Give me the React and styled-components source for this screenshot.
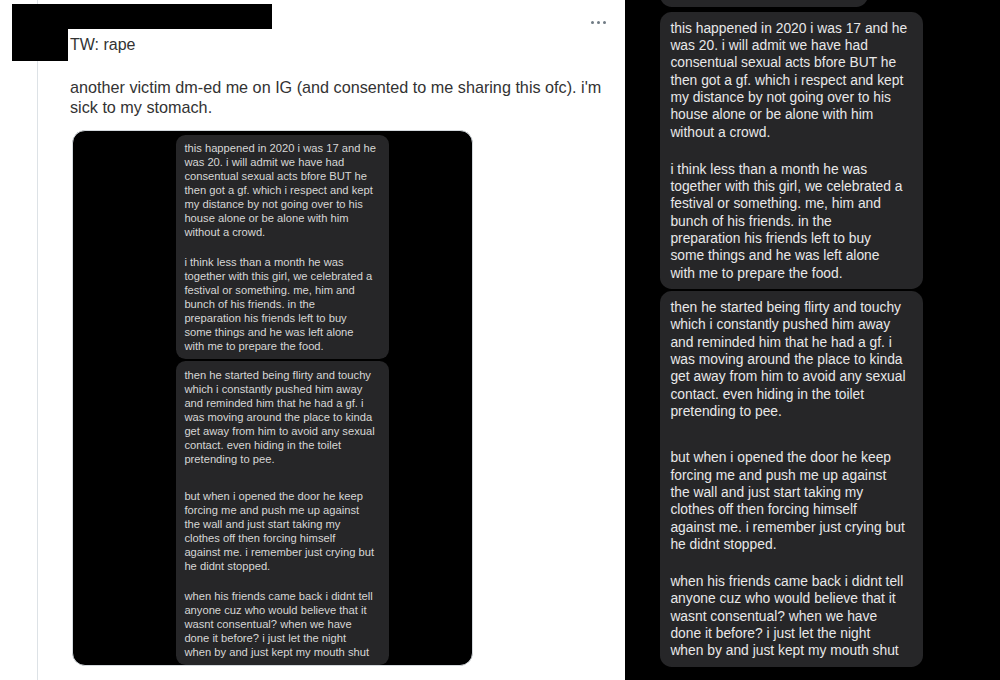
import React from 'react';
import styled, { createGlobalStyle } from 'styled-components';

const GlobalStyle = createGlobalStyle`
  html, body {
    margin: 0;
    padding: 0;
    background: #ffffff;
  }

  #root {
    height: 680px;
    overflow: hidden;
  }
`;

const Page = styled.div`
  display: flex;
  width: 1000px;
  height: 680px;
  overflow: hidden;
  font-family: 'Liberation Sans', Arial, sans-serif;
`;

const TweetPane = styled.div`
  position: relative;
  display: flex;
  flex: 0 0 625px;
  padding-left: 37px;
  box-sizing: border-box;
  background: #ffffff;
`;

const TweetColumn = styled.div`
  flex: 1;
  display: flex;
  flex-direction: column;
  padding: 12px 18px 0 32px;
  border-left: 1px solid #dde2e6;
`;

const Redaction = styled.div`
  position: absolute;
  top: 4px;
  left: 12px;
  width: ${props => props.$w}px;
  height: ${props => props.$h}px;
  background: #000000;
`;

const HeaderRow = styled.div`
  display: flex;
  justify-content: flex-end;
  align-items: center;
  height: 20px;
`;

const MoreButton = styled.div`
  display: flex;
  gap: 3px;
  padding-right: 1px;

  & span {
    width: 3px;
    height: 3px;
    border-radius: 50%;
    background: #707b84;
  }
`;

const Warning = styled.div`
  margin-top: 3px;
  font-size: 16px;
  line-height: 20px;
  color: #333333;
`;

const Body = styled.p`
  margin: 23px 0 0;
  font-size: 16.2px;
  line-height: 19.5px;
  color: #333333;
  white-space: nowrap;
`;

const Media = styled.div`
  margin: 13px 0 0 2px;
  width: 401px;
  height: 536px;
  box-sizing: border-box;
  padding: 4px 0 0 103px;
  border-radius: 13px;
  border: 1px solid #d4d9dd;
  background: #000000;
  overflow: hidden;
`;

const ScreenPane = styled.div`
  flex: 1;
  background: #000000;
  padding-left: 35px;
  overflow: hidden;
`;

const Thread = styled.div`
  display: flex;
  flex-direction: column;
  gap: 2px;
  font-size: ${props => props.$size}px;
  color: ${props => props.$ink};
`;

const Bubble = styled.div`
  width: 19em;
  box-sizing: border-box;
  padding: 0.55em 0.75em;
  border-radius: 0.85em;
  background: #262628;
`;

const Stub = styled(Bubble)`
  width: 15em;
  height: 30px;
  margin: -23px 0 3px;
  padding: 0;
`;

const Paragraph = styled.div`
  margin-top: ${props => props.$gap}em;
  line-height: 1.252em;
  white-space: nowrap;

  &:first-child {
    margin-top: 0;
  }
`;

const Line = styled.span`
  display: block;
`;

const messages = [
  [
    {
      gap: 0,
      lines: [
        'this happened in 2020 i was 17 and he',
        'was 20. i will admit we have had',
        'consentual sexual acts bfore BUT he',
        'then got a gf. which i respect and kept',
        'my distance by not going over to his',
        'house alone or be alone with him',
        'without a crowd.',
      ],
    },
    {
      gap: 1.42,
      lines: [
        'i think less than a month he was',
        'together with this girl, we celebrated a',
        'festival or something. me, him and',
        'bunch of his friends. in the',
        'preparation his friends left to buy',
        'some things and he was left alone',
        'with me to prepare the food.',
      ],
    },
  ],
  [
    {
      gap: 0,
      lines: [
        'then he started being flirty and touchy',
        'which i constantly pushed him away',
        'and reminded him that he had a gf. i',
        'was moving around the place to kinda',
        'get away from him to avoid any sexual',
        'contact. even hiding in the toilet',
        'pretending to pee.',
      ],
    },
    {
      gap: 2.1,
      lines: [
        'but when i opened the door he keep',
        'forcing me and push me up against',
        'the wall and just start taking my',
        'clothes off then forcing himself',
        'against me. i remember just crying but',
        'he didnt stopped.',
      ],
    },
    {
      gap: 1.42,
      lines: [
        'when his friends came back i didnt tell',
        'anyone cuz who would believe that it',
        'wasnt consentual? when we have',
        'done it before? i just let the night',
        'when by and just kept my mouth shut',
      ],
    },
  ],
];

const Conversation = ({ size, ink, stub }) => (
  <Thread $size={size} $ink={ink}>
    {stub && <Stub />}
    {messages.map((paragraphs, i) => (
      <Bubble key={i}>
        {paragraphs.map((p, j) => (
          <Paragraph key={j} $gap={p.gap}>
            {p.lines.map(line => (
              <Line key={line}>{line}</Line>
            ))}
          </Paragraph>
        ))}
      </Bubble>
    ))}
  </Thread>
);

const App = () => (
  <>
    <GlobalStyle />
    <Page>
      <TweetPane>
        <TweetColumn>
          <HeaderRow>
            <MoreButton>
              <span />
              <span />
              <span />
            </MoreButton>
          </HeaderRow>
          <Warning>TW: rape</Warning>
          <Body>
            another victim dm-ed me on IG (and consented to me sharing this ofc). i'm
            <br />
            sick to my stomach.
          </Body>
          <Media>
            <Conversation size={11.2} ink="#d6d6d6" />
          </Media>
        </TweetColumn>
        <Redaction $w={260} $h={25} />
        <Redaction $w={56} $h={57} />
      </TweetPane>
      <ScreenPane>
        <Conversation size={13.84} ink="#e8e8e8" stub />
      </ScreenPane>
    </Page>
  </>
);

export default App;
